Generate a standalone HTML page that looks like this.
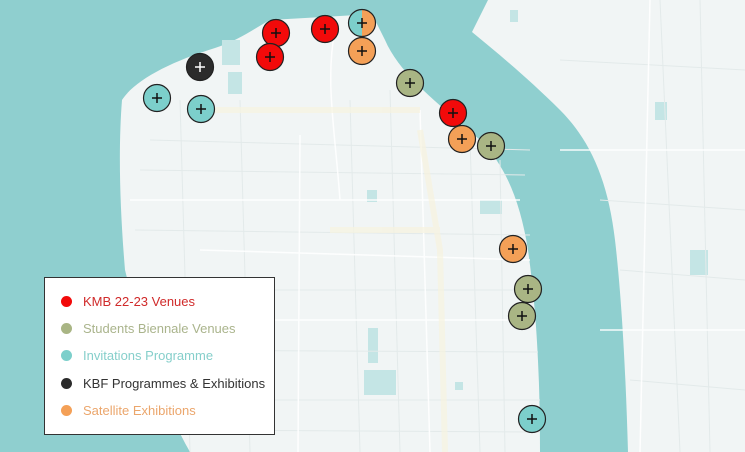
<!DOCTYPE html>
<html><head><style>
body{margin:0;width:745px;height:452px;overflow:hidden;background:#8fcfcf;font-family:"Liberation Sans",sans-serif}
svg{position:absolute;left:0;top:0}
.lg{position:absolute;left:44px;top:277px;width:231px;height:158px;background:#fff;border:1.5px solid #333;box-sizing:border-box}
.it{position:absolute;left:18px;font-size:13px;white-space:nowrap}
.it i{position:absolute;left:-2px;top:2px;width:11px;height:11px;border-radius:50%}
.it span{position:absolute;left:20px;top:0}
</style></head><body>
<svg width="745" height="452" viewBox="0 0 745 452">
<path d="M122 100 C135 80 170 62 215 48 C240 40 255 28 270 20 L340 16 L372 14 L385 40 C400 75 440 105 480 140 C505 165 520 200 528 250 C535 300 540 360 540 452 L190 452 C160 400 140 330 125 270 C120 210 118 150 122 100Z" fill="#f1f5f5"/>
<path d="M488 0 L745 0 L745 452 L628 452 C626 380 622 300 615 240 C608 180 590 140 560 110 C530 80 500 55 472 32 Z" fill="#f1f5f5"/>
<g fill="#c4e5e5">
<rect x="222" y="40" width="18" height="25"/><rect x="228" y="72" width="14" height="22"/>
<rect x="655" y="102" width="12" height="18"/><rect x="480" y="200" width="22" height="14"/>
<rect x="368" y="328" width="10" height="35"/><rect x="364" y="370" width="32" height="25"/>
<rect x="690" y="250" width="18" height="25"/><rect x="510" y="10" width="8" height="12"/>
<rect x="367" y="190" width="10" height="12"/><rect x="455" y="382" width="8" height="8"/>
</g>
<g stroke="#e3eaea" stroke-width="1" fill="none">
<path d="M150 140 L530 150M140 170 L525 175M135 230 L530 235M130 290 L535 290M140 350 L538 352M160 400 L540 400M180 430 L540 432"/>
<path d="M180 100 L190 452M240 100 L250 452M350 100 L360 452M390 90 L400 452M470 140 L480 452M500 160 L505 452"/>
<path d="M660 0 L680 452M700 0 L710 452M600 200 L745 210M620 270 L745 280M630 380 L745 390M560 60 L745 70"/>
</g>
<g stroke="#fff" stroke-width="1.5" fill="none" opacity=".9">
<path d="M300 135 L298 452"/><path d="M335 30 C325 80 335 130 340 200"/><path d="M130 200 L520 200"/><path d="M140 320 L535 320"/><path d="M200 250 L530 260"/><path d="M420 110 L430 452"/><path d="M650 0 L640 452"/><path d="M560 150 L745 150"/><path d="M600 330 L745 330"/>
</g>
<g stroke="#f7f3df" stroke-width="6" fill="none" opacity=".7">
<path d="M215 110 L420 110"/><path d="M420 130 L440 250 L445 452"/><path d="M330 230 L440 230"/>
</g>
<g stroke="#222" stroke-width="1.2">
<circle cx="276" cy="33" r="13.5" fill="#f20a0a"/>
<circle cx="270" cy="57" r="13.5" fill="#f20a0a"/>
<circle cx="325" cy="29" r="13.5" fill="#f20a0a"/>
<circle cx="362" cy="51" r="13.5" fill="#f4a057"/>
<circle cx="200" cy="67" r="13.5" fill="#2b2b2b"/>
<circle cx="157" cy="98" r="13.5" fill="#7ccfcb"/>
<circle cx="201" cy="109" r="13.5" fill="#7ccfcb"/>
<circle cx="410" cy="83" r="13.5" fill="#a9b584"/>
<circle cx="453" cy="113" r="13.5" fill="#f20a0a"/>
<circle cx="462" cy="139" r="13.5" fill="#f4a057"/>
<circle cx="491" cy="146" r="13.5" fill="#a9b584"/>
<circle cx="513" cy="249" r="13.5" fill="#f4a057"/>
<circle cx="528" cy="289" r="13.5" fill="#a9b584"/>
<circle cx="522" cy="316" r="13.5" fill="#a9b584"/>
<circle cx="532" cy="419" r="13.5" fill="#7ccfcb"/>
</g>
<path d="M362 9.5 A13.5 13.5 0 0 0 362 36.5Z" fill="#7ccfcb"/>
<path d="M362 9.5 A13.5 13.5 0 0 1 362 36.5Z" fill="#f4a057"/>
<circle cx="362" cy="23" r="13.5" fill="none" stroke="#222" stroke-width="1.2"/>
<g stroke="#111" stroke-width="1.5">
<path d="M276 28v10M271 33h10M270 52v10M265 57h10M325 24v10M320 29h10M362 18v10M357 23h10M362 46v10M357 51h10M157 93v10M152 98h10M201 104v10M196 109h10M410 78v10M405 83h10M453 108v10M448 113h10M462 134v10M457 139h10M491 141v10M486 146h10M513 244v10M508 249h10M528 284v10M523 289h10M522 311v10M517 316h10M532 414v10M527 419h10"/>
</g>
<path d="M200 62v10M195 67h10" stroke="#fff" stroke-width="1.5"/>
</svg>
<div class="lg">
<div class="it" style="top:16px;color:#d02a2a"><i style="background:#f20a0a"></i><span>KMB 22-23 Venues</span></div>
<div class="it" style="top:43px;color:#aab48c"><i style="background:#a9b584"></i><span>Students Biennale Venues</span></div>
<div class="it" style="top:70px;color:#86cfcb"><i style="background:#7ccfcb"></i><span>Invitations Programme</span></div>
<div class="it" style="top:98px;color:#333"><i style="background:#2b2b2b"></i><span>KBF Programmes &amp; Exhibitions</span></div>
<div class="it" style="top:125px;color:#eba66c"><i style="background:#f4a057"></i><span>Satellite Exhibitions</span></div>
</div>
</body></html>
